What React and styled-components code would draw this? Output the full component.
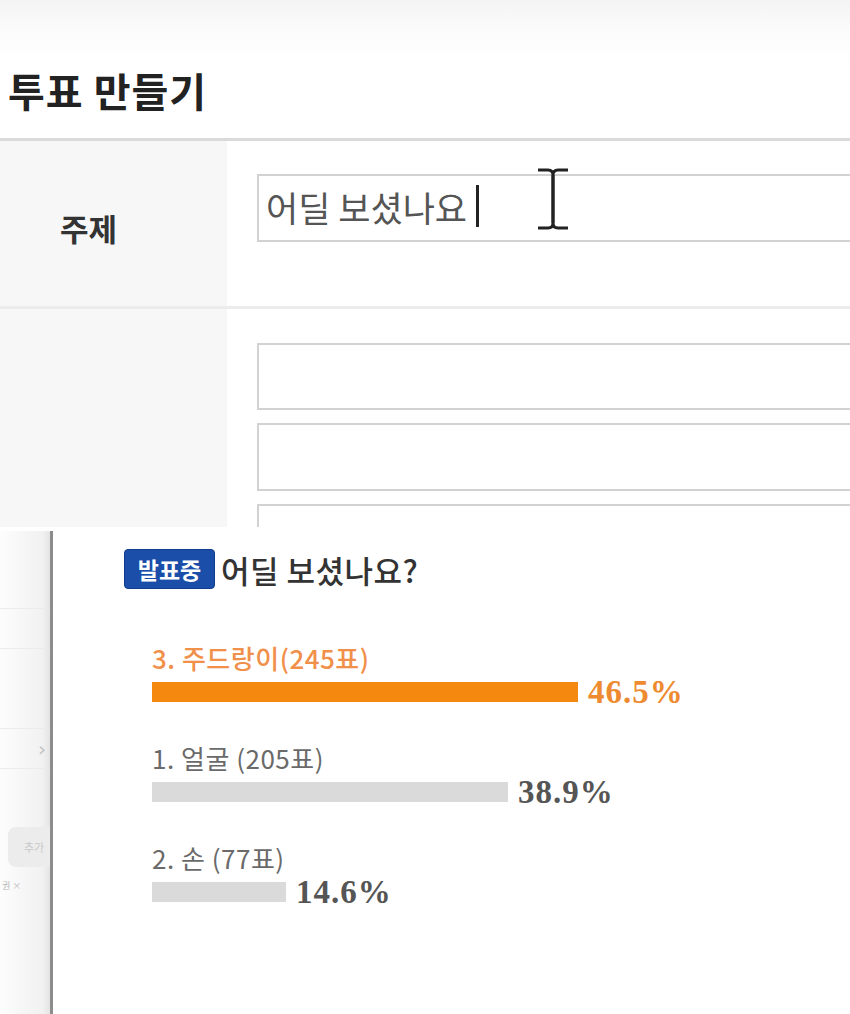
import React from 'react';
import styled, { createGlobalStyle } from 'styled-components';

const GlobalStyle = createGlobalStyle`
  html, body { margin: 0; padding: 0; background: #fff; }
  body {
    width: 850px;
    overflow: hidden;
    font-family: "Noto Sans CJK KR", "Noto Sans", sans-serif;
  }
`;

const options = [
  { no: 3, name: '주드랑이', votes: 245, pct: 46.5, top: true, tight: true },
  { no: 1, name: '얼굴', votes: 205, pct: 38.9 },
  { no: 2, name: '손', votes: 77, pct: 14.6 },
];

const pxPerPct = 9.16;

export default function App() {
  return (
    <>
      <GlobalStyle />
      <Page>
        <EditorShot>
          <Header>
            <PageTitle>투표 만들기</PageTitle>
          </Header>
          <FormRow $height={165}>
            <LabelCell>주제</LabelCell>
            <FieldCell $top={33}>
              <TextBox $h={68}>
                어딜 보셨나요<Caret />
              </TextBox>
              <IBeam width="36" height="64" viewBox="0 0 36 64">
                <path d="M3 3 H13 Q18 3 18 8 Q18 3 23 3 H33" fill="none" stroke="#222" strokeWidth="3" />
                <path d="M18 8 V56" stroke="#222" strokeWidth="3.5" />
                <path d="M3 61 H13 Q18 61 18 56 Q18 61 23 61 H33" fill="none" stroke="#222" strokeWidth="3" />
              </IBeam>
            </FieldCell>
          </FormRow>
          <FormRow>
            <LabelCell />
            <FieldCell $top={34}>
              <TextBox $h={67} />
              <TextBox $h={68} />
              <TextBox $h={68} />
            </FieldCell>
          </FormRow>
        </EditorShot>

        <ResultShot>
          <Sidebar>
            <SideRow $h={78} />
            <SideRow $h={40} />
            <SideRow $h={80} />
            <SideRow $h={40}>
              <Chevron>›</Chevron>
            </SideRow>
            <SidePill>추가</SidePill>
            <SideTag>권 ×</SideTag>
          </Sidebar>

          <Results>
            <Heading>
              <Badge>발표중</Badge>
              <Question>어딜 보셨나요?</Question>
            </Heading>
            <OptionList>
              {options.map(o => (
                <Option key={o.no}>
                  <OptionLabel $top={o.top}>
                    {o.no}. {o.name}{o.tight ? '' : ' '}({o.votes}표)
                  </OptionLabel>
                  <BarRow>
                    <Bar $top={o.top} style={{ width: Math.round(o.pct * pxPerPct) }} />
                    <Percent $top={o.top}>{o.pct}%</Percent>
                  </BarRow>
                </Option>
              ))}
            </OptionList>
          </Results>
        </ResultShot>
      </Page>
    </>
  );
}

const Page = styled.div`
  width: 850px;
  height: 1014px;
  overflow: hidden;
  display: flex;
  flex-direction: column;
`;

/* upper capture: poll editor */
const EditorShot = styled.section`
  height: 527px;
  flex: none;
  overflow: hidden;
  background: #fff;
`;

const Header = styled.div`
  height: 141px;
  box-sizing: border-box;
  padding: 66px 0 0 8px;
  border-bottom: 3px solid #dadada;
  background: linear-gradient(#f4f4f4 0, #fbfbfb 30px, #fff 60px);
`;

const PageTitle = styled.h1`
  margin: 0;
  font-size: 40px;
  line-height: 48px;
  font-weight: 700;
  letter-spacing: 1px;
  color: #222;
`;

const FormRow = styled.div`
  display: flex;
  height: ${p => (p.$height ? `${p.$height}px` : '240px')};
  border-bottom: ${p => (p.$height ? '3px solid #ececec' : 'none')};
`;

const LabelCell = styled.div`
  width: 227px;
  flex: none;
  display: flex;
  align-items: center;
  padding: 8px 0 0 60px;
  box-sizing: border-box;
  background: #f7f7f7;
  font-size: 31px;
  font-weight: 700;
  color: #333;
`;

const FieldCell = styled.div`
  position: relative;
  flex: 1;
  min-width: 0;
  overflow: hidden;
  display: flex;
  flex-direction: column;
  gap: 13px;
  padding: ${p => p.$top}px 0 0 30px;
`;

const TextBox = styled.div`
  width: 700px;
  height: ${p => p.$h}px;
  flex: none;
  box-sizing: border-box;
  border: 2px solid #d2d2d2;
  border-right: none;
  display: flex;
  align-items: center;
  padding: 0 0 4px 7px;
  font-size: 35px;
  color: #555;
  background: #fff;
`;

const Caret = styled.span`
  display: inline-block;
  width: 3px;
  height: 42px;
  margin-left: 9px;
  background: #222;
`;

const IBeam = styled.svg`
  position: absolute;
  left: 308px;
  top: 26px;
`;

/* lower capture: poll results */
const ResultShot = styled.section`
  flex: 1;
  display: flex;
  background: #fff;
`;

const Sidebar = styled.aside`
  width: 50px;
  flex: none;
  margin-top: 4px;
  border-right: 3px solid #8c8c8c;
  background: linear-gradient(to right, #fdfdfd, #f1f1f1 85%, #e4e4e4);
  display: flex;
  flex-direction: column;
  overflow: hidden;
`;

const SideRow = styled.div`
  height: ${p => p.$h}px;
  flex: none;
  box-sizing: border-box;
  border-bottom: 1px solid #ebebeb;
  display: flex;
  align-items: center;
  justify-content: flex-end;
  padding-right: 4px;
`;

const Chevron = styled.span`
  font-family: "DejaVu Sans", sans-serif;
  font-size: 20px;
  color: #c4c4c4;
`;

const SidePill = styled.div`
  margin: 58px -10px 0 8px;
  height: 40px;
  border-radius: 8px;
  background: #ececec;
  font-size: 11px;
  color: #c8c8c8;
  display: flex;
  align-items: center;
  padding-left: 16px;
`;

const SideTag = styled.div`
  margin-top: 12px;
  font-size: 9px;
  color: #b8b8b8;
  padding-left: 2px;
`;

const Results = styled.div`
  flex: 1;
  padding: 22px 0 0 71px;
`;

const Heading = styled.div`
  display: flex;
  align-items: center;
  gap: 6px;
  height: 40px;
`;

const Badge = styled.span`
  width: 91px;
  height: 40px;
  box-sizing: border-box;
  border-radius: 4px;
  background: #1a4ea8;
  border: 1px solid #0f3c8c;
  color: #fff;
  font-size: 23px;
  font-weight: 700;
  display: flex;
  align-items: center;
  justify-content: center;
`;

const Question = styled.span`
  font-size: 31px;
  letter-spacing: 0.5px;
  color: #333;
  font-weight: 500;
`;

const OptionList = styled.div`
  margin-top: 53px;
  display: flex;
  flex-direction: column;
  gap: 40px;
`;

const Option = styled.div`
  display: flex;
  flex-direction: column;
  gap: 8px;
`;

const OptionLabel = styled.div`
  padding-left: 28px;
  font-size: 26px;
  line-height: 32px;
  letter-spacing: 0.5px;
  color: ${p => (p.$top ? '#f0904a' : '#6a6a6a')};
  font-weight: ${p => (p.$top ? 500 : 400)};
`;

const BarRow = styled.div`
  display: flex;
  align-items: center;
  height: 20px;
  padding-left: 28px;
`;

const Bar = styled.div`
  height: 20px;
  flex: none;
  background: ${p => (p.$top ? '#f5890f' : '#dadada')};
`;

const Percent = styled.span`
  margin-left: 10px;
  font-family: "Liberation Serif", "Times New Roman", serif;
  font-weight: 700;
  font-size: 33px;
  line-height: 20px;
  letter-spacing: 1px;
  color: ${p => (p.$top ? '#ee8a30' : '#555')};
`;
